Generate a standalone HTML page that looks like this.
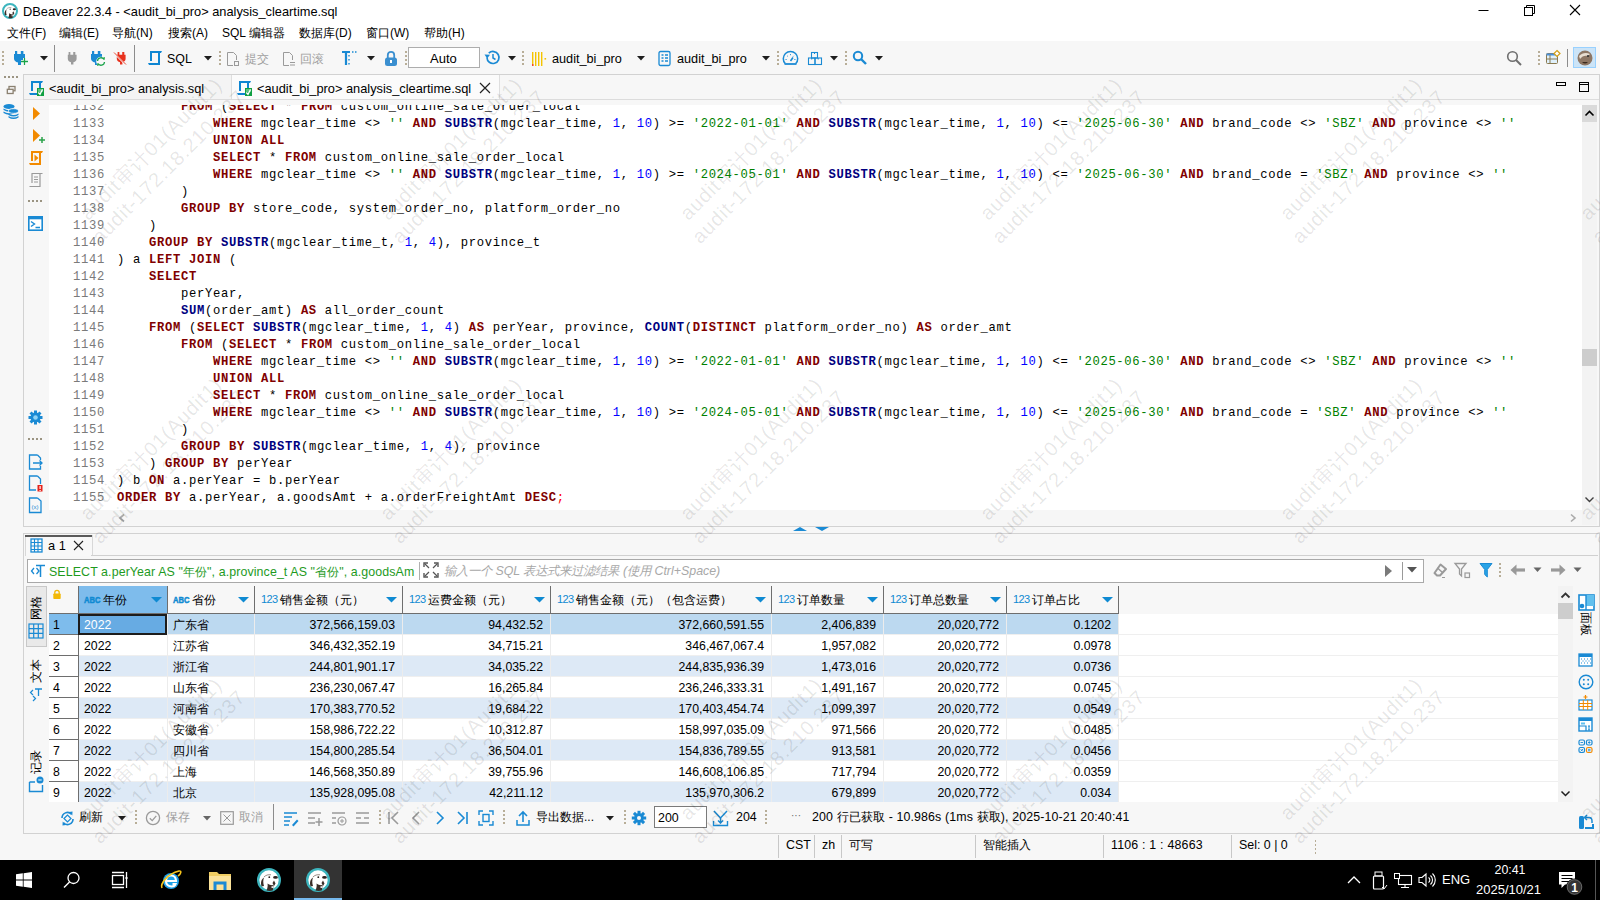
<!DOCTYPE html><html><head><meta charset="utf-8"><title>DBeaver</title><style>
*{margin:0;padding:0}
html,body{width:1600px;height:900px;overflow:hidden}
body{position:relative;background:#f7f7f7;font-family:"Liberation Sans",sans-serif;font-size:12px;color:#000}
.a{position:absolute;white-space:nowrap}
svg.a{overflow:visible}
.cl{position:absolute;left:0;height:17px;line-height:17px;font-family:"Liberation Mono",monospace;font-size:12.2px;letter-spacing:0.68px;white-space:pre;width:1533px}
.ln{position:absolute;left:24px;width:32px;text-align:left;color:#7a7a7a}
.cd{position:absolute;left:68px}
.k{color:#800000;font-weight:bold}
.f{color:#000080;font-weight:bold}
.s{color:#008000;font-style:normal}
.n{color:#0000ff;font-style:normal}
.sc{color:#ff0000;font-style:normal}
.gt{font-size:12.3px;line-height:16px;color:#000}
.wm{position:absolute;width:260px;height:50px;font-size:20px;letter-spacing:0.9px;line-height:25px;color:rgba(0,0,0,0.10);transform:rotate(-45deg);white-space:nowrap;text-align:center}
</style></head><body><div class="a" style="left:0px;top:0px;width:1600px;height:41px;background:#fff"></div>
<svg class="a" style="left:2px;top:3px;" width="16" height="16" viewBox="0 0 16 16"><g transform="scale(0.6666666666666666)"><circle cx="12" cy="12" r="10.5" fill="#fff" stroke="#3db5be" stroke-width="3"/><path d="M4.5 18.5 C3.5 15 4 12.5 5.8 10.5 L7 9.5 C6 12 6 15 7 18 Z" fill="#3a2e28"/><path d="M7 9 C9 7 11 6.5 14 6.8" stroke="#6a5a50" stroke-width="0.7" fill="none"/><circle cx="12.3" cy="9.2" r="0.9" fill="#2b2220"/><ellipse cx="18.5" cy="9.4" rx="2.4" ry="1.4" fill="#2b2220"/><path d="M10.5 15.5 C12.5 16.8 14.5 17.5 16.5 17 L16 22.2 C14 23.2 11.5 23.2 9.5 22.5 C10.5 20 11 18 10.5 15.5 Z" fill="#3a2e28"/><path d="M15.5 15 L17 12.5 L18.5 15.5 L17 18 Z" fill="#3a2e28"/><rect x="14.5" y="18.3" width="1.6" height="1.6" fill="#fff"/></g></svg>
<div class="a " style="left:23px;top:4px;font-size:12.8px;line-height:16px;color:#000;">DBeaver 22.3.4 - &lt;audit_bi_pro&gt; analysis_cleartime.sql</div>
<svg class="a" style="left:1476px;top:5px;" width="16" height="12" viewBox="0 0 16 12"><rect x="2.5" y="5" width="10" height="1" fill="#000"/></svg>
<svg class="a" style="left:1520px;top:3px;" width="16" height="14" viewBox="0 0 16 14"><rect x="4.5" y="4.5" width="8" height="8" fill="none" stroke="#000"/><path d="M6.5 4.5 V2.5 H14.5 V10.5 H12.5" fill="none" stroke="#000"/></svg>
<svg class="a" style="left:1568px;top:3px;" width="14" height="14" viewBox="0 0 14 14"><path d="M2 2 L12 12 M12 2 L2 12" stroke="#000" stroke-width="1.1"/></svg>
<div class="a " style="left:7px;top:25px;font-size:12px;line-height:16px;color:#000;">文件(F)</div>
<div class="a " style="left:59px;top:25px;font-size:12px;line-height:16px;color:#000;">编辑(E)</div>
<div class="a " style="left:112px;top:25px;font-size:12px;line-height:16px;color:#000;">导航(N)</div>
<div class="a " style="left:168px;top:25px;font-size:12px;line-height:16px;color:#000;">搜索(A)</div>
<div class="a " style="left:222px;top:25px;font-size:12px;line-height:16px;color:#000;">SQL 编辑器</div>
<div class="a " style="left:299px;top:25px;font-size:12px;line-height:16px;color:#000;">数据库(D)</div>
<div class="a " style="left:366px;top:25px;font-size:12px;line-height:16px;color:#000;">窗口(W)</div>
<div class="a " style="left:424px;top:25px;font-size:12px;line-height:16px;color:#000;">帮助(H)</div>
<div class="a" style="left:0px;top:41px;width:1600px;height:33px;background:#f7f7f7"></div>
<svg class="a" style="left:2px;top:51px;" width="2" height="16" viewBox="0 0 2 16"><rect x="0" y="0" width="2" height="2" fill="#b8ae98"/><rect x="0" y="4" width="2" height="2" fill="#b8ae98"/><rect x="0" y="8" width="2" height="2" fill="#b8ae98"/><rect x="0" y="12" width="2" height="2" fill="#b8ae98"/></svg>
<svg class="a" style="left:13px;top:51px;" width="16" height="16" viewBox="0 0 16 16"><path d="M1 3 H12 V7.5 C12 9.5 10.5 11 8 11.5 V14 H5 V11.5 C2.5 11 1 9.5 1 7.5 Z" fill="#1a8ad4"/><rect x="2" y="0" width="2.2" height="3.5" fill="#1a8ad4"/><rect x="7.8" y="0" width="2.6" height="3.5" fill="#1a8ad4"/><path d="M11.5 7 v7 M8 10.5 h7" stroke="#fff" stroke-width="3"/><path d="M11.5 7 v7 M8 10.5 h7" stroke="#1aa34a" stroke-width="1.3"/></svg>
<svg class="a" style="left:40px;top:56px;" width="8" height="5" viewBox="0 0 8 5"><path d="M0 0 H8 L4.0 4.5 Z" fill="#1e1e1e"/></svg>
<div class="a" style="left:54px;top:45px;width:1px;height:27px;background:#8c8c8c"></div>
<svg class="a" style="left:67px;top:52px;" width="14" height="16" viewBox="0 0 14 16"><g transform="scale(0.8 0.9)"><path d="M1 3 H12 V7.5 C12 9.5 10.5 11 8 11.5 V14 H5 V11.5 C2.5 11 1 9.5 1 7.5 Z" fill="#9b9b9b"/><rect x="2" y="0" width="2.2" height="3.5" fill="#9b9b9b"/><rect x="7.8" y="0" width="2.6" height="3.5" fill="#9b9b9b"/></g></svg>
<svg class="a" style="left:90px;top:51px;" width="16" height="16" viewBox="0 0 16 16"><path d="M1 3 H12 V7.5 C12 9.5 10.5 11 8 11.5 V14 H5 V11.5 C2.5 11 1 9.5 1 7.5 Z" fill="#1a8ad4"/><rect x="2" y="0" width="2.2" height="3.5" fill="#1a8ad4"/><rect x="7.8" y="0" width="2.6" height="3.5" fill="#1a8ad4"/><circle cx="11" cy="10.5" r="4.8" fill="#f7f7f7"/><path d="M7.5 10 a3.5 3.5 0 0 1 6.5 -1.5 M14.5 11 a3.5 3.5 0 0 1 -6.5 1.5" stroke="#1aa34a" stroke-width="1.3" fill="none"/><path d="M12.5 7 L14.5 9 L15 6 Z M9.5 14 L7.5 12 L7 15 Z" fill="#1aa34a"/></svg>
<svg class="a" style="left:114px;top:52px;" width="16" height="16" viewBox="0 0 16 16"><g transform="translate(2 0) scale(0.8 0.9)"><path d="M1 3 H12 V7.5 C12 9.5 10.5 11 8 11.5 V14 H5 V11.5 C2.5 11 1 9.5 1 7.5 Z" fill="#e8321e"/><rect x="2" y="0" width="2.2" height="3.5" fill="#e8321e"/><rect x="7.8" y="0" width="2.6" height="3.5" fill="#e8321e"/></g><path d="M0.5 1.5 L12 13" stroke="#f7f7f7" stroke-width="1.6"/><path d="M0 0.5 L12 12.5" stroke="#e8321e" stroke-width="0.9"/></svg>
<div class="a" style="left:134px;top:45px;width:1px;height:27px;background:#8c8c8c"></div>
<svg class="a" style="left:147px;top:50px;" width="16" height="16" viewBox="0 0 16 16"><path d="M3 1 H15 L14 3 H3 Z M3 1 H5 V11 H3 Z M11 1 H13 V15 H11 Z M1 13 H13 V15 H2 Z" fill="#0f86d2"/></svg>
<div class="a " style="left:167px;top:51px;font-size:12.4px;line-height:16px;color:#000;">SQL</div>
<svg class="a" style="left:204px;top:56px;" width="8" height="5" viewBox="0 0 8 5"><path d="M0 0 H8 L4.0 4.5 Z" fill="#1e1e1e"/></svg>
<svg class="a" style="left:219px;top:51px;" width="2" height="16" viewBox="0 0 2 16"><rect x="0" y="0" width="2" height="2" fill="#b8ae98"/><rect x="0" y="4" width="2" height="2" fill="#b8ae98"/><rect x="0" y="8" width="2" height="2" fill="#b8ae98"/><rect x="0" y="12" width="2" height="2" fill="#b8ae98"/></svg>
<svg class="a" style="left:226px;top:51px;" width="13" height="16" viewBox="0 0 13 16"><path d="M1.5 1.5 H7.5 L10.5 4.5 V9 M1.5 1.5 V14.5 H7" stroke="#9a9a9a" fill="none"/><rect x="8.5" y="10.5" width="4" height="4" fill="none" stroke="#9a9a9a"/></svg>
<div class="a " style="left:245px;top:51px;font-size:12.4px;line-height:16px;color:#a0a0a0;">提交</div>
<svg class="a" style="left:282px;top:51px;" width="14" height="16" viewBox="0 0 14 16"><path d="M1.5 1.5 H7.5 L10.5 4.5 V9 M1.5 1.5 V14.5 H7" stroke="#9a9a9a" fill="none"/><path d="M8 11.5 H13 M8 14 H13" stroke="#9a9a9a"/></svg>
<div class="a " style="left:300px;top:51px;font-size:12.4px;line-height:16px;color:#a0a0a0;">回滚</div>
<svg class="a" style="left:341px;top:50px;" width="16" height="16" viewBox="0 0 16 16"><path d="M1 2 H9 M5 2 V15" stroke="#1a8ad4" stroke-width="2.2"/><path d="M11 2 h1.5 M14 2 h1.5 M8 5 v1.5 M8 9 v1.5 M8 13 v1.5" stroke="#1a8ad4" stroke-width="1.4"/></svg>
<svg class="a" style="left:367px;top:56px;" width="8" height="5" viewBox="0 0 8 5"><path d="M0 0 H8 L4.0 4.5 Z" fill="#1e1e1e"/></svg>
<svg class="a" style="left:384px;top:50px;" width="14" height="17" viewBox="0 0 14 17"><path d="M3.8 8 V5 a3.2 3.2 0 0 1 6.4 0 V8" stroke="#3a8fd0" stroke-width="1.8" fill="none"/><rect x="1" y="7.5" width="12" height="8.5" rx="2.5" fill="#3a8fd0"/><rect x="6" y="10" width="2" height="3" fill="#fff"/></svg>
<svg class="a" style="left:405px;top:51px;" width="2" height="16" viewBox="0 0 2 16"><rect x="0" y="0" width="2" height="2" fill="#b8ae98"/><rect x="0" y="4" width="2" height="2" fill="#b8ae98"/><rect x="0" y="8" width="2" height="2" fill="#b8ae98"/><rect x="0" y="12" width="2" height="2" fill="#b8ae98"/></svg>
<div class="a" style="left:408px;top:47px;width:72px;height:21px;background:#fff;border:1px solid #adadad;box-sizing:border-box"></div>
<div class="a " style="left:430px;top:51px;font-size:13px;line-height:16px;color:#000;">Auto</div>
<svg class="a" style="left:484px;top:49px;" width="17" height="17" viewBox="0 0 17 17"><path d="M3 8.5 a6 6 0 1 0 1.8 -4.3" stroke="#1a8ad4" stroke-width="1.7" fill="none"/><path d="M0.5 5.5 L3.2 9.5 L6 5.8 Z" fill="#1a8ad4"/><path d="M9 5 V9 L11.5 10.5" stroke="#1a8ad4" stroke-width="1.5" fill="none"/></svg>
<svg class="a" style="left:508px;top:56px;" width="8" height="5" viewBox="0 0 8 5"><path d="M0 0 H8 L4.0 4.5 Z" fill="#1e1e1e"/></svg>
<svg class="a" style="left:522px;top:51px;" width="2" height="16" viewBox="0 0 2 16"><rect x="0" y="0" width="2" height="2" fill="#b8ae98"/><rect x="0" y="4" width="2" height="2" fill="#b8ae98"/><rect x="0" y="8" width="2" height="2" fill="#b8ae98"/><rect x="0" y="12" width="2" height="2" fill="#b8ae98"/></svg>
<svg class="a" style="left:532px;top:51px;" width="15" height="16" viewBox="0 0 15 16"><rect x="0" y="1" width="1.4" height="14" fill="#f5c400"/><rect x="3" y="1" width="1.4" height="14" fill="#f5c400"/><rect x="6" y="1" width="1.4" height="14" fill="#f5c400"/><rect x="9" y="1" width="1.4" height="14" fill="#f5c400"/><rect x="12.5" y="7" width="1.6" height="1.6" fill="#f5c400"/><rect x="0" y="13" width="1.4" height="2" fill="#e43"/></svg>
<div class="a " style="left:552px;top:51px;font-size:12.7px;line-height:16px;color:#000;">audit_bi_pro</div>
<svg class="a" style="left:637px;top:56px;" width="8" height="5" viewBox="0 0 8 5"><path d="M0 0 H8 L4.0 4.5 Z" fill="#1e1e1e"/></svg>
<svg class="a" style="left:658px;top:50px;" width="14" height="17" viewBox="0 0 14 17"><rect x="1" y="1.5" width="11" height="14" rx="1.5" fill="none" stroke="#1a8ad4" stroke-width="1.3"/><path d="M3.5 5 h2 M7 5 h3 M3.5 8 h2 M7 8 h3 M3.5 11 h2 M7 11 h3" stroke="#1a8ad4" stroke-width="1.3"/></svg>
<div class="a " style="left:677px;top:51px;font-size:12.7px;line-height:16px;color:#000;">audit_bi_pro</div>
<svg class="a" style="left:762px;top:56px;" width="8" height="5" viewBox="0 0 8 5"><path d="M0 0 H8 L4.0 4.5 Z" fill="#1e1e1e"/></svg>
<svg class="a" style="left:777px;top:51px;" width="2" height="16" viewBox="0 0 2 16"><rect x="0" y="0" width="2" height="2" fill="#b8ae98"/><rect x="0" y="4" width="2" height="2" fill="#b8ae98"/><rect x="0" y="8" width="2" height="2" fill="#b8ae98"/><rect x="0" y="12" width="2" height="2" fill="#b8ae98"/></svg>
<svg class="a" style="left:782px;top:51px;" width="18" height="16" viewBox="0 0 18 16"><path d="M3.2 12.5 A7.2 7.2 0 1 1 13.8 12.5" stroke="#1a8ad4" stroke-width="1.5" fill="none"/><path d="M2.5 13 H14.5" stroke="#1a8ad4" stroke-width="1.8"/><path d="M8.5 10 L11 6.5" stroke="#1a8ad4" stroke-width="1.6"/><path d="M3.5 8.5 h1.2 M5.2 4.8 l0.8 0.8 M8.5 3 v1.2 M11.8 4.8 l-0.8 0.8 M12.3 8.5 h1.2" stroke="#1a8ad4" stroke-width="0.9"/></svg>
<svg class="a" style="left:807px;top:51px;" width="15" height="15" viewBox="0 0 15 15"><rect x="4.5" y="1.5" width="6" height="5.5" fill="none" stroke="#1a8ad4" stroke-width="1.1"/><rect x="1.5" y="7" width="6.5" height="6.5" fill="none" stroke="#1a8ad4" stroke-width="1.1"/><rect x="8" y="7" width="6.5" height="6.5" fill="none" stroke="#1a8ad4" stroke-width="1.1"/><path d="M7.5 1.5 V3 M4.7 7 V8.5 M11.2 7 V8.5" stroke="#1a8ad4" stroke-width="1"/></svg>
<svg class="a" style="left:830px;top:56px;" width="8" height="5" viewBox="0 0 8 5"><path d="M0 0 H8 L4.0 4.5 Z" fill="#1e1e1e"/></svg>
<svg class="a" style="left:845px;top:51px;" width="2" height="16" viewBox="0 0 2 16"><rect x="0" y="0" width="2" height="2" fill="#b8ae98"/><rect x="0" y="4" width="2" height="2" fill="#b8ae98"/><rect x="0" y="8" width="2" height="2" fill="#b8ae98"/><rect x="0" y="12" width="2" height="2" fill="#b8ae98"/></svg>
<svg class="a" style="left:852px;top:50px;" width="16" height="16" viewBox="0 0 16 16"><circle cx="6" cy="6" r="4.2" fill="none" stroke="#1a8ad4" stroke-width="2"/><path d="M9 9 L14 14" stroke="#1a8ad4" stroke-width="2.4"/></svg>
<svg class="a" style="left:875px;top:56px;" width="8" height="5" viewBox="0 0 8 5"><path d="M0 0 H8 L4.0 4.5 Z" fill="#1e1e1e"/></svg>
<svg class="a" style="left:1506px;top:50px;" width="17" height="17" viewBox="0 0 17 17"><circle cx="6.5" cy="6.5" r="4.8" fill="none" stroke="#6f6f6f" stroke-width="1.6"/><path d="M10 10 L15 15" stroke="#6f6f6f" stroke-width="2"/></svg>
<svg class="a" style="left:1538px;top:51px;" width="2" height="16" viewBox="0 0 2 16"><rect x="0" y="0" width="2" height="2" fill="#b8ae98"/><rect x="0" y="4" width="2" height="2" fill="#b8ae98"/><rect x="0" y="8" width="2" height="2" fill="#b8ae98"/><rect x="0" y="12" width="2" height="2" fill="#b8ae98"/></svg>
<svg class="a" style="left:1545px;top:50px;" width="16" height="16" viewBox="0 0 16 16"><rect x="1.5" y="3.5" width="11" height="10" rx="1" fill="#dff0fb" stroke="#8a7a50" stroke-width="1"/><rect x="1.5" y="3.5" width="11" height="2" fill="#4a90d9"/><path d="M5 5 V13.5 M1.5 9 H12.5" stroke="#8a7a50"/><path d="M12 0.5 L15 3.5 L12 6.5 L9 3.5 Z" fill="#fff" stroke="#d4a017" stroke-width="1.2"/></svg>
<div class="a" style="left:1567px;top:49px;width:1px;height:18px;background:#8c8c8c"></div>
<div class="a" style="left:1573px;top:47px;width:23px;height:21px;background:#cce4f7;border:1px solid #99d1ff;box-sizing:border-box"></div>
<svg class="a" style="left:1577px;top:50px;" width="16" height="16" viewBox="0 0 16 16"><circle cx="8" cy="8" r="7.5" fill="#8d7664"/><path d="M2 6 C5 3 9 2 13 4 L11 6 C8 5 5 6 3 9 Z" fill="#e8ddd0"/><circle cx="11" cy="6" r="1" fill="#2b2b2b"/><path d="M5 12 Q8 15 11 12" fill="#3b2b20"/></svg>
<svg class="a" style="left:4px;top:76px;" width="14" height="2" viewBox="0 0 14 2"><rect x="0" y="0" width="2" height="2" fill="#9b9482"/><rect x="4" y="0" width="2" height="2" fill="#9b9482"/><rect x="8" y="0" width="2" height="2" fill="#9b9482"/><rect x="12" y="0" width="2" height="2" fill="#9b9482"/></svg>
<svg class="a" style="left:6px;top:85px;" width="10" height="10" viewBox="0 0 10 10"><rect x="3" y="1.5" width="6" height="4.3" fill="none" stroke="#8a8070" stroke-width="1.3"/><rect x="1.3" y="4.3" width="5.8" height="4.2" fill="#f7f7f7" stroke="#8a8070" stroke-width="1.3"/></svg>
<svg class="a" style="left:3px;top:103px;" width="16" height="17" viewBox="0 0 16 17"><ellipse cx="6" cy="3.5" rx="5.5" ry="2.5" fill="#1a8ad4"/><path d="M0.5 5.5 Q6 9 11.5 5.5 V7 Q6 10.5 0.5 7 Z M0.5 8.5 Q6 12 11.5 8.5 V10 Q6 13.5 0.5 10 Z" fill="#1a8ad4"/><ellipse cx="10.5" cy="8" rx="5" ry="2.3" fill="#1a8ad4" stroke="#f7f7f7" stroke-width="0.8"/><path d="M5.5 10.5 Q10.5 13.5 15.5 10.5 V12 Q10.5 15 5.5 12 Z M5.5 13 Q10.5 16 15.5 13 V14.5 Q10.5 17.5 5.5 14.5 Z" fill="#1a8ad4"/></svg>
<div class="a" style="left:23px;top:74px;width:1577px;height:453px;background:#f7f7f7;border:1px solid #d2d2d2;box-sizing:border-box"></div>
<div class="a" style="left:24px;top:75px;width:208px;height:24px;background:#f4f4f4"></div>
<div class="a" style="left:231px;top:75px;width:267px;height:24px;background:#fbfbfb;border-left:1px solid #dedede;border-right:1px solid #dedede"></div>
<div class="a" style="left:24px;top:99px;width:1575px;height:1px;background:#dcdcdc"></div>
<svg class="a" style="left:28px;top:80px;" width="17" height="17" viewBox="0 0 17 17"><path d="M3 1 H15 L14 3 H3 Z M3 1 H5 V11 H3 Z M11 1 H13 V15 H11 Z M1 13 H13 V15 H2 Z" fill="#0f86d2"/><rect x="9" y="8" width="7" height="8" fill="#10a042"/><rect x="10" y="9" width="5" height="3" fill="#5cbf80"/><path d="M10.3 12.5 L12 14.3 L14.5 9.5" stroke="#fff" stroke-width="1.3" fill="none"/></svg>
<div class="a " style="left:49px;top:81px;font-size:12.8px;line-height:16px;color:#000;">&lt;audit_bi_pro&gt; analysis.sql</div>
<svg class="a" style="left:236px;top:80px;" width="17" height="17" viewBox="0 0 17 17"><path d="M3 1 H15 L14 3 H3 Z M3 1 H5 V11 H3 Z M11 1 H13 V15 H11 Z M1 13 H13 V15 H2 Z" fill="#0f86d2"/><rect x="9" y="8" width="7" height="8" fill="#10a042"/><rect x="10" y="9" width="5" height="3" fill="#5cbf80"/><path d="M10.3 12.5 L12 14.3 L14.5 9.5" stroke="#fff" stroke-width="1.3" fill="none"/></svg>
<div class="a " style="left:257px;top:81px;font-size:12.8px;line-height:16px;color:#000;">&lt;audit_bi_pro&gt; analysis_cleartime.sql</div>
<svg class="a" style="left:479px;top:82px;" width="12" height="12" viewBox="0 0 12 12"><path d="M1 1 L11 11 M11 1 L1 11" stroke="#222" stroke-width="1.2"/></svg>
<svg class="a" style="left:1556px;top:82px;" width="11" height="5" viewBox="0 0 11 5"><rect x="0.5" y="0.5" width="9" height="3" fill="none" stroke="#000" stroke-width="1"/></svg>
<svg class="a" style="left:1579px;top:82px;" width="11" height="11" viewBox="0 0 11 11"><rect x="0.5" y="0.5" width="9" height="9" fill="none" stroke="#000" stroke-width="1"/><path d="M0.5 2.5 H9.5" stroke="#000" stroke-width="1"/></svg>
<svg class="a" style="left:32px;top:107px;" width="9" height="14" viewBox="0 0 9 14"><path d="M1 0 L8 6.5 L1 13 Z" fill="#f28a00"/></svg>
<svg class="a" style="left:32px;top:129px;" width="13" height="14" viewBox="0 0 13 14"><path d="M1 0 L8 6.5 L1 13 Z" fill="#f28a00"/><path d="M10 8 v6 M7 11 h6" stroke="#2aa24a" stroke-width="1.5"/></svg>
<svg class="a" style="left:28px;top:150px;" width="16" height="16" viewBox="0 0 16 16"><path d="M3 1 H15 L14 3 H3 Z M3 1 H5 V11 H3 Z M11 1 H13 V15 H11 Z M1 13 H13 V15 H2 Z" fill="#f28a00"/><path d="M6.5 4.5 L10.5 8 L6.5 11.5 Z" fill="#f28a00"/></svg>
<svg class="a" style="left:28px;top:172px;" width="16" height="16" viewBox="0 0 16 16"><path d="M3.5 1.5 H14.5 M4 1.5 V11 M12 1.5 V14.5 H1.5" stroke="#9a9a9a" stroke-width="1.2" fill="none"/><path d="M6 5 h4 M6 7.5 h4 M6 10 h4" stroke="#9a9a9a"/></svg>
<svg class="a" style="left:28px;top:200px;" width="14" height="2" viewBox="0 0 14 2"><rect x="0" y="0" width="2" height="2" fill="#9b9482"/><rect x="4" y="0" width="2" height="2" fill="#9b9482"/><rect x="8" y="0" width="2" height="2" fill="#9b9482"/><rect x="12" y="0" width="2" height="2" fill="#9b9482"/></svg>
<svg class="a" style="left:28px;top:216px;" width="15" height="15" viewBox="0 0 15 15"><rect x="0.8" y="0.8" width="13.4" height="13.4" fill="#fff" stroke="#1a8ad4" stroke-width="1.6"/><rect x="0.8" y="0.8" width="13.4" height="2.5" fill="#1a8ad4"/><path d="M3 5.5 L6.5 8 L3 10.5 M7.5 11.5 H12" stroke="#1a8ad4" stroke-width="1.4" fill="none"/></svg>
<svg class="a" style="left:28px;top:410px;" width="15" height="15" viewBox="0 0 15 15"><circle cx="7.5" cy="7.5" r="5" fill="#1a8ad4"/><rect x="6" y="0.5" width="3" height="3.5" fill="#1a8ad4" transform="rotate(0 7.5 7.5)"/><rect x="6" y="0.5" width="3" height="3.5" fill="#1a8ad4" transform="rotate(45 7.5 7.5)"/><rect x="6" y="0.5" width="3" height="3.5" fill="#1a8ad4" transform="rotate(90 7.5 7.5)"/><rect x="6" y="0.5" width="3" height="3.5" fill="#1a8ad4" transform="rotate(135 7.5 7.5)"/><rect x="6" y="0.5" width="3" height="3.5" fill="#1a8ad4" transform="rotate(180 7.5 7.5)"/><rect x="6" y="0.5" width="3" height="3.5" fill="#1a8ad4" transform="rotate(225 7.5 7.5)"/><rect x="6" y="0.5" width="3" height="3.5" fill="#1a8ad4" transform="rotate(270 7.5 7.5)"/><rect x="6" y="0.5" width="3" height="3.5" fill="#1a8ad4" transform="rotate(315 7.5 7.5)"/><circle cx="7.5" cy="7.5" r="2.3" fill="#8fd3f5"/></svg>
<svg class="a" style="left:28px;top:438px;" width="14" height="2" viewBox="0 0 14 2"><rect x="0" y="0" width="2" height="2" fill="#9b9482"/><rect x="4" y="0" width="2" height="2" fill="#9b9482"/><rect x="8" y="0" width="2" height="2" fill="#9b9482"/><rect x="12" y="0" width="2" height="2" fill="#9b9482"/></svg>
<svg class="a" style="left:28px;top:454px;" width="15" height="16" viewBox="0 0 15 16"><path d="M9.5 1 H1.5 V15 H12.5 V12 M12.5 6 V4 L9.5 1" stroke="#1a8ad4" stroke-width="1.3" fill="none"/><path d="M5 9 H14 M11.5 6.5 L14 9 L11.5 11.5" stroke="#1a8ad4" stroke-width="1.3" fill="none"/></svg>
<svg class="a" style="left:28px;top:475px;" width="15" height="17" viewBox="0 0 15 17"><path d="M9.5 1 H1.5 V15 H8 M12.5 9 V4 L9.5 1" stroke="#1a8ad4" stroke-width="1.3" fill="none"/><rect x="9.5" y="10" width="5" height="6.5" fill="#e5231b"/><rect x="11.5" y="11" width="1.2" height="3" fill="#fff"/><rect x="11.5" y="15" width="1.2" height="1" fill="#fff"/></svg>
<svg class="a" style="left:28px;top:497px;" width="15" height="17" viewBox="0 0 15 17"><path d="M9.5 1 H1.5 V15.5 H13 V4 L9.5 1" stroke="#1a8ad4" stroke-width="1.3" fill="none"/><text x="7" y="12" font-size="6" fill="#1a8ad4" text-anchor="middle" font-family="Liberation Sans">(x)</text></svg>
<div class="a" style="left:49px;top:105px;width:1533px;height:405px;background:#fff"></div>
<div class="a" style="left:49px;top:105px;width:1533px;height:405px;overflow:hidden">
<div class="cl" style="top:-6.5px"><span class="ln">1132</span><span class="cd">        <b class="k">FROM</b> (<b class="k">SELECT</b> * <b class="k">FROM</b> custom_online_sale_order_local</span></div>
<div class="cl" style="top:10.5px"><span class="ln">1133</span><span class="cd">            <b class="k">WHERE</b> mgclear_time &lt;&gt; <i class="s">''</i> <b class="k">AND</b> <b class="f">SUBSTR</b>(mgclear_time, <i class="n">1</i>, <i class="n">10</i>) &gt;= <i class="s">'2022-01-01'</i> <b class="k">AND</b> <b class="f">SUBSTR</b>(mgclear_time, <i class="n">1</i>, <i class="n">10</i>) &lt;= <i class="s">'2025-06-30'</i> <b class="k">AND</b> brand_code &lt;&gt; <i class="s">'SBZ'</i> <b class="k">AND</b> province &lt;&gt; <i class="s">''</i></span></div>
<div class="cl" style="top:27.5px"><span class="ln">1134</span><span class="cd">            <b class="k">UNION</b> <b class="k">ALL</b></span></div>
<div class="cl" style="top:44.5px"><span class="ln">1135</span><span class="cd">            <b class="k">SELECT</b> * <b class="k">FROM</b> custom_online_sale_order_local</span></div>
<div class="cl" style="top:61.5px"><span class="ln">1136</span><span class="cd">            <b class="k">WHERE</b> mgclear_time &lt;&gt; <i class="s">''</i> <b class="k">AND</b> <b class="f">SUBSTR</b>(mgclear_time, <i class="n">1</i>, <i class="n">10</i>) &gt;= <i class="s">'2024-05-01'</i> <b class="k">AND</b> <b class="f">SUBSTR</b>(mgclear_time, <i class="n">1</i>, <i class="n">10</i>) &lt;= <i class="s">'2025-06-30'</i> <b class="k">AND</b> brand_code = <i class="s">'SBZ'</i> <b class="k">AND</b> province &lt;&gt; <i class="s">''</i></span></div>
<div class="cl" style="top:78.5px"><span class="ln">1137</span><span class="cd">        )</span></div>
<div class="cl" style="top:95.5px"><span class="ln">1138</span><span class="cd">        <b class="k">GROUP</b> <b class="k">BY</b> store_code, system_order_no, platform_order_no</span></div>
<div class="cl" style="top:112.5px"><span class="ln">1139</span><span class="cd">    )</span></div>
<div class="cl" style="top:129.5px"><span class="ln">1140</span><span class="cd">    <b class="k">GROUP</b> <b class="k">BY</b> <b class="f">SUBSTR</b>(mgclear_time_t, <i class="n">1</i>, <i class="n">4</i>), province_t</span></div>
<div class="cl" style="top:146.5px"><span class="ln">1141</span><span class="cd">) a <b class="k">LEFT</b> <b class="k">JOIN</b> (</span></div>
<div class="cl" style="top:163.5px"><span class="ln">1142</span><span class="cd">    <b class="k">SELECT</b></span></div>
<div class="cl" style="top:180.5px"><span class="ln">1143</span><span class="cd">        perYear,</span></div>
<div class="cl" style="top:197.5px"><span class="ln">1144</span><span class="cd">        <b class="f">SUM</b>(order_amt) <b class="k">AS</b> all_order_count</span></div>
<div class="cl" style="top:214.5px"><span class="ln">1145</span><span class="cd">    <b class="k">FROM</b> (<b class="k">SELECT</b> <b class="f">SUBSTR</b>(mgclear_time, <i class="n">1</i>, <i class="n">4</i>) <b class="k">AS</b> perYear, province, <b class="f">COUNT</b>(<b class="k">DISTINCT</b> platform_order_no) <b class="k">AS</b> order_amt</span></div>
<div class="cl" style="top:231.5px"><span class="ln">1146</span><span class="cd">        <b class="k">FROM</b> (<b class="k">SELECT</b> * <b class="k">FROM</b> custom_online_sale_order_local</span></div>
<div class="cl" style="top:248.5px"><span class="ln">1147</span><span class="cd">            <b class="k">WHERE</b> mgclear_time &lt;&gt; <i class="s">''</i> <b class="k">AND</b> <b class="f">SUBSTR</b>(mgclear_time, <i class="n">1</i>, <i class="n">10</i>) &gt;= <i class="s">'2022-01-01'</i> <b class="k">AND</b> <b class="f">SUBSTR</b>(mgclear_time, <i class="n">1</i>, <i class="n">10</i>) &lt;= <i class="s">'2025-06-30'</i> <b class="k">AND</b> brand_code &lt;&gt; <i class="s">'SBZ'</i> <b class="k">AND</b> province &lt;&gt; <i class="s">''</i></span></div>
<div class="cl" style="top:265.5px"><span class="ln">1148</span><span class="cd">            <b class="k">UNION</b> <b class="k">ALL</b></span></div>
<div class="cl" style="top:282.5px"><span class="ln">1149</span><span class="cd">            <b class="k">SELECT</b> * <b class="k">FROM</b> custom_online_sale_order_local</span></div>
<div class="cl" style="top:299.5px"><span class="ln">1150</span><span class="cd">            <b class="k">WHERE</b> mgclear_time &lt;&gt; <i class="s">''</i> <b class="k">AND</b> <b class="f">SUBSTR</b>(mgclear_time, <i class="n">1</i>, <i class="n">10</i>) &gt;= <i class="s">'2024-05-01'</i> <b class="k">AND</b> <b class="f">SUBSTR</b>(mgclear_time, <i class="n">1</i>, <i class="n">10</i>) &lt;= <i class="s">'2025-06-30'</i> <b class="k">AND</b> brand_code = <i class="s">'SBZ'</i> <b class="k">AND</b> province &lt;&gt; <i class="s">''</i></span></div>
<div class="cl" style="top:316.5px"><span class="ln">1151</span><span class="cd">        )</span></div>
<div class="cl" style="top:333.5px"><span class="ln">1152</span><span class="cd">        <b class="k">GROUP</b> <b class="k">BY</b> <b class="f">SUBSTR</b>(mgclear_time, <i class="n">1</i>, <i class="n">4</i>), province</span></div>
<div class="cl" style="top:350.5px"><span class="ln">1153</span><span class="cd">    ) <b class="k">GROUP</b> <b class="k">BY</b> perYear</span></div>
<div class="cl" style="top:367.5px"><span class="ln">1154</span><span class="cd">) b <b class="k">ON</b> a.perYear = b.perYear</span></div>
<div class="cl" style="top:384.5px"><span class="ln">1155</span><span class="cd"><b class="k">ORDER</b> <b class="k">BY</b> a.perYear, a.goodsAmt + a.orderFreightAmt <b class="k">DESC</b><i class="sc">;</i></span></div>
</div>
<div class="a" style="left:1582px;top:105px;width:15px;height:420px;background:#f3f3f3"></div>
<div class="a" style="left:1582px;top:105px;width:15px;height:17px;background:#dadada"></div>
<svg class="a" style="left:1584px;top:109px;" width="11" height="8" viewBox="0 0 11 8"><path d="M1.5 6.5 L5.5 2.5 L9.5 6.5" stroke="#000" stroke-width="1.6" fill="none"/></svg>
<div class="a" style="left:1582px;top:349px;width:15px;height:17px;background:#cdcdcd"></div>
<svg class="a" style="left:1584px;top:496px;" width="11" height="8" viewBox="0 0 11 8"><path d="M1.5 1.5 L5.5 5.5 L9.5 1.5" stroke="#404040" stroke-width="1.4" fill="none"/></svg>
<div class="a" style="left:49px;top:510px;width:1533px;height:15px;background:#f6f6f6"></div>
<svg class="a" style="left:118px;top:513px;" width="8" height="10" viewBox="0 0 8 10"><path d="M6 1.5 L2 5 L6 8.5" stroke="#aaa" stroke-width="1.8" fill="none"/></svg>
<svg class="a" style="left:1569px;top:513px;" width="8" height="10" viewBox="0 0 8 10"><path d="M2 1.5 L6 5 L2 8.5" stroke="#aaa" stroke-width="1.6" fill="none"/></svg>
<div class="a" style="left:23px;top:527px;width:1577px;height:6px;background:#f7f7f7"></div>
<svg class="a" style="left:792px;top:526px;" width="16" height="6" viewBox="0 0 16 6"><path d="M1 5 L8 1 L15 5 Z" fill="#1a8ad4"/></svg>
<svg class="a" style="left:814px;top:526px;" width="16" height="6" viewBox="0 0 16 6"><path d="M1 1 L8 5 L15 1 Z" fill="#1a8ad4"/></svg>
<div class="a" style="left:23px;top:533px;width:1577px;height:301px;background:#f7f7f7;border:1px solid #d2d2d2;box-sizing:border-box"></div>
<div class="a" style="left:25px;top:535px;width:66px;height:21px;background:#f8f8f8;border-left:1px solid #d8d8d8;border-right:1px solid #d8d8d8"></div>
<div class="a" style="left:25px;top:535px;width:67px;height:2px;background:#5a5a5a"></div>
<div class="a" style="left:91px;top:555px;width:1507px;height:1px;background:#d0d0d0"></div>
<svg class="a" style="left:30px;top:538px;" width="14" height="16" viewBox="0 0 14 16"><rect x="1" y="1" width="11" height="13" fill="none" stroke="#1a8ad4" stroke-width="1.3"/><path d="M1 4.5 H12 M1 8 H12 M1 11.5 H12 M4.5 1 V14 M8 1 V14" stroke="#1a8ad4" stroke-width="1.1"/></svg>
<div class="a " style="left:48px;top:538px;font-size:12.8px;line-height:16px;color:#000;">a 1</div>
<svg class="a" style="left:73px;top:540px;" width="11" height="11" viewBox="0 0 11 11"><path d="M1 1 L10 10 M10 1 L1 10" stroke="#222" stroke-width="1.1"/></svg>
<div class="a" style="left:27px;top:559px;width:1397px;height:24px;background:#fff;border:1px solid #a9a9a9;box-sizing:border-box"></div>
<svg class="a" style="left:30px;top:563px;" width="16" height="16" viewBox="0 0 16 16"><path d="M4 5 L1.5 8 L4 11" stroke="#1a8ad4" stroke-width="1.3" fill="none"/><path d="M6.5 5 L9 8 L6.5 11" stroke="#1a8ad4" stroke-width="1.3" fill="none"/><path d="M6 2.5 H15 M10.5 2.5 V14" stroke="#1a8ad4" stroke-width="1.5"/></svg>
<div class="a " style="left:49px;top:564px;font-size:12.4px;line-height:16px;color:#1e9a1e;letter-spacing:0.1px">SELECT a.perYear AS "年份", a.province_t AS "省份", a.goodsAm</div>
<div class="a" style="left:419px;top:562px;width:1px;height:18px;background:#b0b0b0"></div>
<svg class="a" style="left:423px;top:562px;" width="16" height="17" viewBox="0 0 16 17"><path d="M1 5 V1 H5 M11 1 H15 V5 M15 11 V15 H11 M5 15 H1 V11" stroke="#555" stroke-width="1.4" fill="none"/><path d="M2 2 L6 6 M14 2 L10 6 M14 14 L10 10 M2 14 L6 10" stroke="#555" stroke-width="1.2"/></svg>
<div class="a " style="left:444px;top:563px;font-size:12.4px;line-height:16px;color:#a8a8a8;font-style:italic">输入一个 SQL 表达式来过滤结果 (使用 Ctrl+Space)</div>
<svg class="a" style="left:1384px;top:564px;" width="9" height="14" viewBox="0 0 9 14"><path d="M1 1 L8 7 L1 13 Z" fill="#7a7a7a"/></svg>
<div class="a" style="left:1402px;top:562px;width:1px;height:18px;background:#9a9a9a"></div>
<svg class="a" style="left:1406px;top:566px;" width="12" height="8" viewBox="0 0 12 8"><path d="M1 1 H11 L6 6.5 Z" fill="#555"/></svg>
<svg class="a" style="left:1432px;top:562px;" width="17" height="17" viewBox="0 0 17 17"><path d="M8.5 2.5 L14 7 L8 13.5 H5 L2.5 11 Z" fill="none" stroke="#9a9a9a" stroke-width="2" stroke-linejoin="round"/><path d="M5.5 6 L10.5 10.5" stroke="#9a9a9a" stroke-width="1.5"/><path d="M10 15.5 H13" stroke="#9a9a9a"/></svg>
<svg class="a" style="left:1454px;top:562px;" width="17" height="17" viewBox="0 0 17 17"><path d="M1 1.5 H12 L7.5 7 V14 L5.5 12 V7 Z" fill="none" stroke="#9a9a9a" stroke-width="1.3"/><rect x="11" y="11" width="4.5" height="4.5" fill="none" stroke="#9a9a9a" stroke-width="1.2"/></svg>
<svg class="a" style="left:1479px;top:562px;" width="14" height="17" viewBox="0 0 14 17"><path d="M1 1.5 H13 L8.3 7.5 V15 L5.7 12.5 V7.5 Z" fill="#29a3e6" stroke="#1a8ad4" stroke-width="1"/></svg>
<div class="a" style="left:1499px;top:563px;width:2px;height:15px;background:repeating-linear-gradient(#b8ae98 0 2px,transparent 2px 4px)"></div>
<svg class="a" style="left:1510px;top:564px;" width="16" height="12" viewBox="0 0 16 12"><path d="M6.5 0.5 L0.5 6 L6.5 11.5 Z" fill="#999"/><path d="M5 6 H15" stroke="#999" stroke-width="3.2"/></svg>
<svg class="a" style="left:1533px;top:567px;" width="9" height="6" viewBox="0 0 9 6"><path d="M0.5 0.5 H8.5 L4.5 5 Z" fill="#666"/></svg>
<svg class="a" style="left:1550px;top:564px;" width="16" height="12" viewBox="0 0 16 12"><path d="M9.5 0.5 L15.5 6 L9.5 11.5 Z" fill="#999"/><path d="M1 6 H11" stroke="#999" stroke-width="3.2"/></svg>
<svg class="a" style="left:1573px;top:567px;" width="9" height="6" viewBox="0 0 9 6"><path d="M0.5 0.5 H8.5 L4.5 5 Z" fill="#666"/></svg>
<div class="a" style="left:26px;top:586px;width:21px;height:61px;background:#e9e9e9;border:1px solid #c8c8c8;box-sizing:border-box"></div>
<div class="a " style="left:21px;top:600px;font-size:12.4px;line-height:16px;color:#000;width:30px;text-align:center;transform:rotate(-90deg)">网格</div>
<svg class="a" style="left:28px;top:623px;" width="16" height="16" viewBox="0 0 16 16"><rect x="1" y="1" width="14" height="14" fill="none" stroke="#1a8ad4" stroke-width="1.2"/><path d="M1 5.7 H15 M1 10.3 H15 M5.7 1 V15 M10.3 1 V15" stroke="#1a8ad4" stroke-width="1.2"/></svg>
<div class="a " style="left:21px;top:663px;font-size:12.4px;line-height:16px;color:#000;width:30px;text-align:center;transform:rotate(-90deg)">文本</div>
<svg class="a" style="left:29px;top:687px;" width="14" height="16" viewBox="0 0 14 16"><path d="M4 3 L1.5 5.5 L4 8 M4 9 L6.5 11.5 L4 14" stroke="#1a8ad4" stroke-width="1.2" fill="none"/><path d="M6 2 H13 M9.5 2 V9" stroke="#1a8ad4" stroke-width="1.3"/></svg>
<div class="a " style="left:21px;top:754px;font-size:12.4px;line-height:16px;color:#000;width:30px;text-align:center;transform:rotate(-90deg)">记录</div>
<svg class="a" style="left:28px;top:776px;" width="16" height="17" viewBox="0 0 16 17"><path d="M1.5 6 V15.5 H14.5 V9 M7 6 H1.5" stroke="#1a8ad4" stroke-width="1.4" fill="none"/><circle cx="12" cy="4" r="3.5" fill="#1a8ad4"/><path d="M10.3 4 H13.7" stroke="#fff" stroke-width="1"/></svg>
<div class="a" style="left:49px;top:586px;width:1509px;height:216px;background:#fff"></div>
<div class="a" style="left:49px;top:586px;width:1509px;height:28px;background:#f7f7f7"></div>
<div class="a" style="left:78px;top:586px;width:89px;height:28px;background:#7ebcec"></div>
<div class="a" style="left:49px;top:613px;width:1069px;height:1px;background:#6e6e6e"></div>
<div class="a" style="left:78px;top:586px;width:1px;height:28px;background:#6e6e6e"></div>
<div class="a" style="left:167px;top:586px;width:1px;height:28px;background:#6e6e6e"></div>
<div class="a" style="left:254px;top:586px;width:1px;height:28px;background:#6e6e6e"></div>
<div class="a" style="left:402px;top:586px;width:1px;height:28px;background:#6e6e6e"></div>
<div class="a" style="left:550px;top:586px;width:1px;height:28px;background:#6e6e6e"></div>
<div class="a" style="left:771px;top:586px;width:1px;height:28px;background:#6e6e6e"></div>
<div class="a" style="left:883px;top:586px;width:1px;height:28px;background:#6e6e6e"></div>
<div class="a" style="left:1006px;top:586px;width:1px;height:28px;background:#6e6e6e"></div>
<div class="a" style="left:1118px;top:586px;width:1px;height:28px;background:#6e6e6e"></div>
<svg class="a" style="left:53px;top:590px;" width="8" height="9" viewBox="0 0 8 9"><rect x="0.3" y="3.5" width="7.4" height="5.5" rx="0.8" fill="#f2b807"/><path d="M1.8 4 V2.6 a2.2 2.2 0 0 1 4.4 0 V4" stroke="#f2b807" stroke-width="1.3" fill="none"/></svg>
<svg class="a" style="left:84px;top:595px;" width="18" height="9" viewBox="0 0 18 9"><text x="0" y="7.8" font-size="9.6" font-weight="bold" fill="#0f8ad2" stroke="#0f8ad2" stroke-width="0.5" font-family="Liberation Sans" textLength="16.5" lengthAdjust="spacingAndGlyphs">ABC</text></svg>
<div class="a " style="left:103px;top:592px;font-size:12.4px;line-height:16px;color:#000;">年份</div>
<svg class="a" style="left:151px;top:597px;" width="11" height="6" viewBox="0 0 11 6"><path d="M0 0 H11 L5.5 5.5 Z" fill="#0f8ad2"/></svg>
<svg class="a" style="left:173px;top:595px;" width="18" height="9" viewBox="0 0 18 9"><text x="0" y="7.8" font-size="9.6" font-weight="bold" fill="#0f8ad2" stroke="#0f8ad2" stroke-width="0.5" font-family="Liberation Sans" textLength="16.5" lengthAdjust="spacingAndGlyphs">ABC</text></svg>
<div class="a " style="left:192px;top:592px;font-size:12.4px;line-height:16px;color:#000;">省份</div>
<svg class="a" style="left:238px;top:597px;" width="11" height="6" viewBox="0 0 11 6"><path d="M0 0 H11 L5.5 5.5 Z" fill="#0f8ad2"/></svg>
<div class="a " style="left:261px;top:592px;font-size:11px;line-height:14px;color:#0f8ad2;letter-spacing:-0.6px">123</div>
<div class="a " style="left:280px;top:592px;font-size:12.4px;line-height:16px;color:#000;">销售金额（元）</div>
<svg class="a" style="left:386px;top:597px;" width="11" height="6" viewBox="0 0 11 6"><path d="M0 0 H11 L5.5 5.5 Z" fill="#0f8ad2"/></svg>
<div class="a " style="left:409px;top:592px;font-size:11px;line-height:14px;color:#0f8ad2;letter-spacing:-0.6px">123</div>
<div class="a " style="left:428px;top:592px;font-size:12.4px;line-height:16px;color:#000;">运费金额（元）</div>
<svg class="a" style="left:534px;top:597px;" width="11" height="6" viewBox="0 0 11 6"><path d="M0 0 H11 L5.5 5.5 Z" fill="#0f8ad2"/></svg>
<div class="a " style="left:557px;top:592px;font-size:11px;line-height:14px;color:#0f8ad2;letter-spacing:-0.6px">123</div>
<div class="a " style="left:576px;top:592px;font-size:12.4px;line-height:16px;color:#000;">销售金额（元）（包含运费）</div>
<svg class="a" style="left:755px;top:597px;" width="11" height="6" viewBox="0 0 11 6"><path d="M0 0 H11 L5.5 5.5 Z" fill="#0f8ad2"/></svg>
<div class="a " style="left:778px;top:592px;font-size:11px;line-height:14px;color:#0f8ad2;letter-spacing:-0.6px">123</div>
<div class="a " style="left:797px;top:592px;font-size:12.4px;line-height:16px;color:#000;">订单数量</div>
<svg class="a" style="left:867px;top:597px;" width="11" height="6" viewBox="0 0 11 6"><path d="M0 0 H11 L5.5 5.5 Z" fill="#0f8ad2"/></svg>
<div class="a " style="left:890px;top:592px;font-size:11px;line-height:14px;color:#0f8ad2;letter-spacing:-0.6px">123</div>
<div class="a " style="left:909px;top:592px;font-size:12.4px;line-height:16px;color:#000;">订单总数量</div>
<svg class="a" style="left:990px;top:597px;" width="11" height="6" viewBox="0 0 11 6"><path d="M0 0 H11 L5.5 5.5 Z" fill="#0f8ad2"/></svg>
<div class="a " style="left:1013px;top:592px;font-size:11px;line-height:14px;color:#0f8ad2;letter-spacing:-0.6px">123</div>
<div class="a " style="left:1032px;top:592px;font-size:12.4px;line-height:16px;color:#000;">订单占比</div>
<svg class="a" style="left:1102px;top:597px;" width="11" height="6" viewBox="0 0 11 6"><path d="M0 0 H11 L5.5 5.5 Z" fill="#0f8ad2"/></svg>
<div class="a" style="left:49px;top:614px;width:1509px;height:188px;overflow:hidden">
<div class="a" style="left:29px;top:0px;width:1040px;height:21px;background:#bcd9f0"></div>
<div class="a" style="left:0;top:0px;width:29px;height:21px;background:#7ebcec"></div>
<div class="a" style="left:0;top:20px;width:29px;height:1px;background:#6e6e6e"></div>
<div class="a" style="left:29px;top:20px;width:1480px;height:1px;background:#efefef"></div>
<div class="a gt" style="left:4px;top:3px">1</div>
<div class="a gt" style="left:35px;top:3px">2022</div>
<div class="a gt" style="left:124px;top:3px">广东省</div>
<div class="a gt" style="left:205px;width:141px;text-align:right;top:3px">372,566,159.03</div>
<div class="a gt" style="left:353px;width:141px;text-align:right;top:3px">94,432.52</div>
<div class="a gt" style="left:501px;width:214px;text-align:right;top:3px">372,660,591.55</div>
<div class="a gt" style="left:722px;width:105px;text-align:right;top:3px">2,406,839</div>
<div class="a gt" style="left:834px;width:116px;text-align:right;top:3px">20,020,772</div>
<div class="a gt" style="left:957px;width:105px;text-align:right;top:3px">0.1202</div>
<div class="a" style="left:0;top:41px;width:29px;height:1px;background:#6e6e6e"></div>
<div class="a" style="left:29px;top:41px;width:1480px;height:1px;background:#efefef"></div>
<div class="a gt" style="left:4px;top:24px">2</div>
<div class="a gt" style="left:35px;top:24px">2022</div>
<div class="a gt" style="left:124px;top:24px">江苏省</div>
<div class="a gt" style="left:205px;width:141px;text-align:right;top:24px">346,432,352.19</div>
<div class="a gt" style="left:353px;width:141px;text-align:right;top:24px">34,715.21</div>
<div class="a gt" style="left:501px;width:214px;text-align:right;top:24px">346,467,067.4</div>
<div class="a gt" style="left:722px;width:105px;text-align:right;top:24px">1,957,082</div>
<div class="a gt" style="left:834px;width:116px;text-align:right;top:24px">20,020,772</div>
<div class="a gt" style="left:957px;width:105px;text-align:right;top:24px">0.0978</div>
<div class="a" style="left:29px;top:42px;width:1040px;height:21px;background:#dde9f6"></div>
<div class="a" style="left:0;top:62px;width:29px;height:1px;background:#6e6e6e"></div>
<div class="a" style="left:29px;top:62px;width:1480px;height:1px;background:#efefef"></div>
<div class="a gt" style="left:4px;top:45px">3</div>
<div class="a gt" style="left:35px;top:45px">2022</div>
<div class="a gt" style="left:124px;top:45px">浙江省</div>
<div class="a gt" style="left:205px;width:141px;text-align:right;top:45px">244,801,901.17</div>
<div class="a gt" style="left:353px;width:141px;text-align:right;top:45px">34,035.22</div>
<div class="a gt" style="left:501px;width:214px;text-align:right;top:45px">244,835,936.39</div>
<div class="a gt" style="left:722px;width:105px;text-align:right;top:45px">1,473,016</div>
<div class="a gt" style="left:834px;width:116px;text-align:right;top:45px">20,020,772</div>
<div class="a gt" style="left:957px;width:105px;text-align:right;top:45px">0.0736</div>
<div class="a" style="left:0;top:83px;width:29px;height:1px;background:#6e6e6e"></div>
<div class="a" style="left:29px;top:83px;width:1480px;height:1px;background:#efefef"></div>
<div class="a gt" style="left:4px;top:66px">4</div>
<div class="a gt" style="left:35px;top:66px">2022</div>
<div class="a gt" style="left:124px;top:66px">山东省</div>
<div class="a gt" style="left:205px;width:141px;text-align:right;top:66px">236,230,067.47</div>
<div class="a gt" style="left:353px;width:141px;text-align:right;top:66px">16,265.84</div>
<div class="a gt" style="left:501px;width:214px;text-align:right;top:66px">236,246,333.31</div>
<div class="a gt" style="left:722px;width:105px;text-align:right;top:66px">1,491,167</div>
<div class="a gt" style="left:834px;width:116px;text-align:right;top:66px">20,020,772</div>
<div class="a gt" style="left:957px;width:105px;text-align:right;top:66px">0.0745</div>
<div class="a" style="left:29px;top:84px;width:1040px;height:21px;background:#dde9f6"></div>
<div class="a" style="left:0;top:104px;width:29px;height:1px;background:#6e6e6e"></div>
<div class="a" style="left:29px;top:104px;width:1480px;height:1px;background:#efefef"></div>
<div class="a gt" style="left:4px;top:87px">5</div>
<div class="a gt" style="left:35px;top:87px">2022</div>
<div class="a gt" style="left:124px;top:87px">河南省</div>
<div class="a gt" style="left:205px;width:141px;text-align:right;top:87px">170,383,770.52</div>
<div class="a gt" style="left:353px;width:141px;text-align:right;top:87px">19,684.22</div>
<div class="a gt" style="left:501px;width:214px;text-align:right;top:87px">170,403,454.74</div>
<div class="a gt" style="left:722px;width:105px;text-align:right;top:87px">1,099,397</div>
<div class="a gt" style="left:834px;width:116px;text-align:right;top:87px">20,020,772</div>
<div class="a gt" style="left:957px;width:105px;text-align:right;top:87px">0.0549</div>
<div class="a" style="left:0;top:125px;width:29px;height:1px;background:#6e6e6e"></div>
<div class="a" style="left:29px;top:125px;width:1480px;height:1px;background:#efefef"></div>
<div class="a gt" style="left:4px;top:108px">6</div>
<div class="a gt" style="left:35px;top:108px">2022</div>
<div class="a gt" style="left:124px;top:108px">安徽省</div>
<div class="a gt" style="left:205px;width:141px;text-align:right;top:108px">158,986,722.22</div>
<div class="a gt" style="left:353px;width:141px;text-align:right;top:108px">10,312.87</div>
<div class="a gt" style="left:501px;width:214px;text-align:right;top:108px">158,997,035.09</div>
<div class="a gt" style="left:722px;width:105px;text-align:right;top:108px">971,566</div>
<div class="a gt" style="left:834px;width:116px;text-align:right;top:108px">20,020,772</div>
<div class="a gt" style="left:957px;width:105px;text-align:right;top:108px">0.0485</div>
<div class="a" style="left:29px;top:126px;width:1040px;height:21px;background:#dde9f6"></div>
<div class="a" style="left:0;top:146px;width:29px;height:1px;background:#6e6e6e"></div>
<div class="a" style="left:29px;top:146px;width:1480px;height:1px;background:#efefef"></div>
<div class="a gt" style="left:4px;top:129px">7</div>
<div class="a gt" style="left:35px;top:129px">2022</div>
<div class="a gt" style="left:124px;top:129px">四川省</div>
<div class="a gt" style="left:205px;width:141px;text-align:right;top:129px">154,800,285.54</div>
<div class="a gt" style="left:353px;width:141px;text-align:right;top:129px">36,504.01</div>
<div class="a gt" style="left:501px;width:214px;text-align:right;top:129px">154,836,789.55</div>
<div class="a gt" style="left:722px;width:105px;text-align:right;top:129px">913,581</div>
<div class="a gt" style="left:834px;width:116px;text-align:right;top:129px">20,020,772</div>
<div class="a gt" style="left:957px;width:105px;text-align:right;top:129px">0.0456</div>
<div class="a" style="left:0;top:167px;width:29px;height:1px;background:#6e6e6e"></div>
<div class="a" style="left:29px;top:167px;width:1480px;height:1px;background:#efefef"></div>
<div class="a gt" style="left:4px;top:150px">8</div>
<div class="a gt" style="left:35px;top:150px">2022</div>
<div class="a gt" style="left:124px;top:150px">上海</div>
<div class="a gt" style="left:205px;width:141px;text-align:right;top:150px">146,568,350.89</div>
<div class="a gt" style="left:353px;width:141px;text-align:right;top:150px">39,755.96</div>
<div class="a gt" style="left:501px;width:214px;text-align:right;top:150px">146,608,106.85</div>
<div class="a gt" style="left:722px;width:105px;text-align:right;top:150px">717,794</div>
<div class="a gt" style="left:834px;width:116px;text-align:right;top:150px">20,020,772</div>
<div class="a gt" style="left:957px;width:105px;text-align:right;top:150px">0.0359</div>
<div class="a" style="left:29px;top:168px;width:1040px;height:21px;background:#dde9f6"></div>
<div class="a" style="left:0;top:188px;width:29px;height:1px;background:#6e6e6e"></div>
<div class="a" style="left:29px;top:188px;width:1480px;height:1px;background:#efefef"></div>
<div class="a gt" style="left:4px;top:171px">9</div>
<div class="a gt" style="left:35px;top:171px">2022</div>
<div class="a gt" style="left:124px;top:171px">北京</div>
<div class="a gt" style="left:205px;width:141px;text-align:right;top:171px">135,928,095.08</div>
<div class="a gt" style="left:353px;width:141px;text-align:right;top:171px">42,211.12</div>
<div class="a gt" style="left:501px;width:214px;text-align:right;top:171px">135,970,306.2</div>
<div class="a gt" style="left:722px;width:105px;text-align:right;top:171px">679,899</div>
<div class="a gt" style="left:834px;width:116px;text-align:right;top:171px">20,020,772</div>
<div class="a gt" style="left:957px;width:105px;text-align:right;top:171px">0.034</div>
<div class="a" style="left:118px;top:0;width:1px;height:188px;background:#ececec"></div>
<div class="a" style="left:205px;top:0;width:1px;height:188px;background:#ececec"></div>
<div class="a" style="left:353px;top:0;width:1px;height:188px;background:#ececec"></div>
<div class="a" style="left:501px;top:0;width:1px;height:188px;background:#ececec"></div>
<div class="a" style="left:722px;top:0;width:1px;height:188px;background:#ececec"></div>
<div class="a" style="left:834px;top:0;width:1px;height:188px;background:#ececec"></div>
<div class="a" style="left:957px;top:0;width:1px;height:188px;background:#ececec"></div>
<div class="a" style="left:1069px;top:0;width:1px;height:188px;background:#ececec"></div>
<div class="a" style="left:29px;top:0;width:1px;height:188px;background:#6e6e6e"></div>
<div class="a" style="left:29px;top:0;width:89px;height:21px;background:#67abe3;border:2px solid #1c1c1c;box-sizing:border-box"></div>
<div class="a gt" style="left:35px;top:3px;color:#fff">2022</div>
</div>
<div class="a" style="left:1558px;top:586px;width:15px;height:216px;background:#f3f3f3"></div>
<svg class="a" style="left:1560px;top:591px;" width="11" height="8" viewBox="0 0 11 8"><path d="M1.5 6.5 L5.5 2.5 L9.5 6.5" stroke="#333" stroke-width="1.8" fill="none"/></svg>
<div class="a" style="left:1558px;top:603px;width:15px;height:16px;background:#cdcdcd"></div>
<svg class="a" style="left:1560px;top:790px;" width="11" height="8" viewBox="0 0 11 8"><path d="M1.5 1.5 L5.5 5.5 L9.5 1.5" stroke="#1e1e1e" stroke-width="1.5" fill="none"/></svg>
<svg class="a" style="left:1578px;top:594px;" width="17" height="17" viewBox="0 0 17 17"><rect x="1" y="1" width="15" height="15" fill="#fff" stroke="#1a8ad4" stroke-width="1.6"/><rect x="8" y="1" width="8" height="11" fill="#62c0ee"/><path d="M8 1 V16" stroke="#1a8ad4" stroke-width="1.4"/><circle cx="4" cy="12" r="2.3" fill="#1a8ad4"/></svg>
<div class="a " style="left:1570px;top:616px;font-size:12.4px;line-height:16px;color:#000;width:32px;text-align:center;transform:rotate(90deg)">面板</div>
<svg class="a" style="left:1578px;top:653px;" width="15" height="14" viewBox="0 0 15 14"><rect x="1" y="1" width="13" height="12" fill="#fff" stroke="#1a8ad4" stroke-width="1.3"/><rect x="1" y="1" width="13" height="3" fill="#1a8ad4"/><path d="M3 6 h1 M6 6 h1 M9 6 h1 M12 6 h1 M4.5 8 h1 M7.5 8 h1 M10.5 8 h1 M3 10 h1 M6 10 h1 M9 10 h1 M12 10 h1" stroke="#1a8ad4"/></svg>
<svg class="a" style="left:1578px;top:674px;" width="16" height="16" viewBox="0 0 16 16"><circle cx="8" cy="8" r="6.8" fill="none" stroke="#1a8ad4" stroke-width="1.4"/><circle cx="5.8" cy="5.8" r="1" fill="#1a8ad4"/><circle cx="10.2" cy="5.8" r="1" fill="#1a8ad4"/><circle cx="5.8" cy="10.2" r="1" fill="#1a8ad4"/><circle cx="10.2" cy="10.2" r="1" fill="#1a8ad4"/></svg>
<svg class="a" style="left:1578px;top:695px;" width="15" height="16" viewBox="0 0 15 16"><rect x="1" y="5" width="13" height="10" fill="#fff" stroke="#1a8ad4" stroke-width="1.2"/><path d="M1 8.5 H14 M1 11.5 H14 M5.3 5 V15 M9.7 5 V15" stroke="#f28a00" stroke-width="1"/><path d="M7.5 0 V4 M5.5 2 H9.5" stroke="#f28a00" stroke-width="1.2"/></svg>
<svg class="a" style="left:1578px;top:717px;" width="15" height="15" viewBox="0 0 15 15"><rect x="1" y="1" width="13" height="13" fill="#fff" stroke="#1a8ad4" stroke-width="1.4"/><rect x="1" y="1" width="13" height="3" fill="#1a8ad4"/><path d="M1 9 H8 V14" stroke="#1a8ad4" stroke-width="1.2" fill="none"/><rect x="3" y="5.5" width="4" height="2" fill="#62c0ee"/><path d="M11 9 V13 M10 9 H12 M10 13 H12" stroke="#1a8ad4"/></svg>
<svg class="a" style="left:1578px;top:739px;" width="15" height="15" viewBox="0 0 15 15"><rect x="1" y="1" width="5.5" height="5" rx="1.5" fill="none" stroke="#1a8ad4" stroke-width="1.2"/><rect x="8.5" y="1" width="5.5" height="5" rx="1.5" fill="none" stroke="#1a8ad4" stroke-width="1.2"/><rect x="1" y="8.5" width="5.5" height="5" rx="1.5" fill="none" stroke="#1a8ad4" stroke-width="1.2"/><rect x="8.5" y="8.5" width="5.5" height="5" rx="1.5" fill="none" stroke="#f28a00" stroke-width="1.2"/><path d="M2.5 3.5 H5 M10 3.5 H12.5 M11.25 2.2 V4.8 M2.5 10 L5 12.5 M5 10 L2.5 12.5 M10 10.3 H12.5 M10 11.8 H12.5" stroke="#1a8ad4" stroke-width="0.9"/></svg>
<svg class="a" style="left:1578px;top:813px;" width="17" height="17" viewBox="0 0 17 17"><rect x="1" y="3" width="5" height="13" rx="1.5" fill="#1a8ad4"/><path d="M7 15 H15 V11" stroke="#1a8ad4" stroke-width="2" fill="none"/><path d="M9 2 L6.5 4.5 L9 7" stroke="#1a8ad4" stroke-width="1.5" fill="none"/><path d="M7 4.5 H11 C13 4.5 14 6 14 8 V10" stroke="#1a8ad4" stroke-width="1.5" fill="none"/></svg>
<svg class="a" style="left:59px;top:810px;" width="17" height="17" viewBox="0 0 17 17"><path d="M3 8 A5.5 5.5 0 0 1 12.5 4.2" stroke="#1a8ad4" stroke-width="1.6" fill="none"/><path d="M10 2 L13.5 1.5 L13.3 5.5 Z" fill="#1a8ad4"/><path d="M14 9 A5.5 5.5 0 0 1 4.5 12.8" stroke="#1a8ad4" stroke-width="1.6" fill="none"/><path d="M7 15 L3.5 15.5 L3.7 11.5 Z" fill="#1a8ad4"/><path d="M5 8.5 L8.5 5 L12 8.5 L8.5 12 Z" fill="none" stroke="#1a8ad4" stroke-width="1.2"/></svg>
<div class="a " style="left:79px;top:809px;font-size:12.4px;line-height:17px;color:#000;">刷新</div>
<svg class="a" style="left:118px;top:816px;" width="8" height="5" viewBox="0 0 8 5"><path d="M0 0 H8 L4.0 4.5 Z" fill="#1e1e1e"/></svg>
<div class="a" style="left:135px;top:810px;width:2px;height:15px;background:repeating-linear-gradient(#b8ae98 0 2px,transparent 2px 4px)"></div>
<svg class="a" style="left:145px;top:810px;" width="16" height="16" viewBox="0 0 16 16"><circle cx="8" cy="8" r="6.6" fill="none" stroke="#9a9a9a" stroke-width="1.3"/><path d="M4.8 8.3 L7.2 10.6 L11.3 5.8" stroke="#9a9a9a" stroke-width="1.3" fill="none"/></svg>
<div class="a " style="left:166px;top:809px;font-size:12.4px;line-height:17px;color:#a0a0a0;">保存</div>
<svg class="a" style="left:203px;top:816px;" width="8" height="5" viewBox="0 0 8 5"><path d="M0 0 H8 L4.0 4.5 Z" fill="#666"/></svg>
<svg class="a" style="left:220px;top:811px;" width="14" height="14" viewBox="0 0 14 14"><rect x="0.7" y="0.7" width="12.6" height="12.6" fill="none" stroke="#9a9a9a" stroke-width="1.2"/><path d="M3.5 3.5 L10.5 10.5 M10.5 3.5 L3.5 10.5" stroke="#9a9a9a" stroke-width="1"/></svg>
<div class="a " style="left:239px;top:809px;font-size:12.4px;line-height:17px;color:#a0a0a0;">取消</div>
<div class="a" style="left:273px;top:804px;width:1px;height:26px;background:#8c8c8c"></div>
<svg class="a" style="left:283px;top:811px;" width="16" height="15" viewBox="0 0 16 15"><path d="M1 2 H14 M1 6 H9 M1 10 H7 M1 14 H6" stroke="#1a8ad4" stroke-width="1.6"/><path d="M9 14 L14 8.5 L15.5 10 L10.5 15.5 Z" fill="#1a8ad4"/></svg>
<svg class="a" style="left:307px;top:811px;" width="16" height="15" viewBox="0 0 16 15"><path d="M1 2 H14 M1 7 H8 M1 12 H8" stroke="#9a9a9a" stroke-width="1.5"/><path d="M12 7 V15 M8.5 11 H15.5" stroke="#9a9a9a" stroke-width="1.5"/></svg>
<svg class="a" style="left:331px;top:811px;" width="16" height="15" viewBox="0 0 16 15"><path d="M1 2 H14 M1 7 H5 M1 12 H5" stroke="#9a9a9a" stroke-width="1.5"/><circle cx="11" cy="10" r="4" fill="none" stroke="#9a9a9a" stroke-width="1.2"/><path d="M9 10 H13 M11 8 V12" stroke="#9a9a9a" stroke-width="1"/></svg>
<svg class="a" style="left:355px;top:811px;" width="16" height="15" viewBox="0 0 16 15"><path d="M1 2 H14 M1 7 H6 M9 7 H14 M1 12 H14" stroke="#9a9a9a" stroke-width="1.5"/></svg>
<div class="a" style="left:379px;top:810px;width:2px;height:15px;background:repeating-linear-gradient(#b8ae98 0 2px,transparent 2px 4px)"></div>
<svg class="a" style="left:387px;top:810px;" width="14" height="16" viewBox="0 0 14 16"><path d="M2 2 V14" stroke="#9a9a9a" stroke-width="1.6"/><path d="M11 2 L5 8 L11 14" stroke="#9a9a9a" stroke-width="1.6" fill="none"/></svg>
<svg class="a" style="left:410px;top:810px;" width="12" height="16" viewBox="0 0 12 16"><path d="M9 2 L3 8 L9 14" stroke="#9a9a9a" stroke-width="1.6" fill="none"/></svg>
<svg class="a" style="left:434px;top:810px;" width="12" height="16" viewBox="0 0 12 16"><path d="M3 2 L9 8 L3 14" stroke="#1a8ad4" stroke-width="1.6" fill="none"/></svg>
<svg class="a" style="left:455px;top:810px;" width="14" height="16" viewBox="0 0 14 16"><path d="M12 2 V14" stroke="#1a8ad4" stroke-width="1.6"/><path d="M3 2 L9 8 L3 14" stroke="#1a8ad4" stroke-width="1.6" fill="none"/></svg>
<svg class="a" style="left:478px;top:810px;" width="16" height="16" viewBox="0 0 16 16"><path d="M1 5 V1 H5 M11 1 H15 V5 M15 11 V15 H11 M5 15 H1 V11" stroke="#1a8ad4" stroke-width="1.4" fill="none"/><rect x="5" y="4.5" width="6" height="7" fill="none" stroke="#1a8ad4" stroke-width="1.4"/></svg>
<div class="a" style="left:503px;top:810px;width:2px;height:15px;background:repeating-linear-gradient(#b8ae98 0 2px,transparent 2px 4px)"></div>
<svg class="a" style="left:515px;top:810px;" width="16" height="16" viewBox="0 0 16 16"><path d="M8 12 V2 M4 6 L8 2 L12 6" stroke="#1a8ad4" stroke-width="1.6" fill="none"/><path d="M2 10 V15 H14 V10" stroke="#1a8ad4" stroke-width="1.5" fill="none"/></svg>
<div class="a " style="left:536px;top:809px;font-size:12px;line-height:17px;color:#000;">导出数据...</div>
<svg class="a" style="left:606px;top:816px;" width="8" height="5" viewBox="0 0 8 5"><path d="M0 0 H8 L4.0 4.5 Z" fill="#1e1e1e"/></svg>
<div class="a" style="left:624px;top:810px;width:2px;height:15px;background:repeating-linear-gradient(#b8ae98 0 2px,transparent 2px 4px)"></div>
<svg class="a" style="left:631px;top:810px;" width="16" height="16" viewBox="0 0 16 16"><circle cx="8" cy="8" r="4.8" fill="#1a8ad4"/><rect x="6.5" y="0.8" width="3" height="3.5" fill="#1a8ad4" transform="rotate(0 8 8)"/><rect x="6.5" y="0.8" width="3" height="3.5" fill="#1a8ad4" transform="rotate(45 8 8)"/><rect x="6.5" y="0.8" width="3" height="3.5" fill="#1a8ad4" transform="rotate(90 8 8)"/><rect x="6.5" y="0.8" width="3" height="3.5" fill="#1a8ad4" transform="rotate(135 8 8)"/><rect x="6.5" y="0.8" width="3" height="3.5" fill="#1a8ad4" transform="rotate(180 8 8)"/><rect x="6.5" y="0.8" width="3" height="3.5" fill="#1a8ad4" transform="rotate(225 8 8)"/><rect x="6.5" y="0.8" width="3" height="3.5" fill="#1a8ad4" transform="rotate(270 8 8)"/><rect x="6.5" y="0.8" width="3" height="3.5" fill="#1a8ad4" transform="rotate(315 8 8)"/><circle cx="8" cy="8" r="2" fill="#f7f7f7"/></svg>
<div class="a" style="left:654px;top:806px;width:53px;height:22px;background:#fff;border:1px solid #7a7a7a;box-sizing:border-box"></div>
<div class="a " style="left:658px;top:810px;font-size:12.4px;line-height:17px;color:#000;">200</div>
<svg class="a" style="left:712px;top:810px;" width="17" height="17" viewBox="0 0 17 17"><path d="M2 1 L8.5 8 L15 1" stroke="#1a8ad4" stroke-width="1.5" fill="none"/><path d="M8.5 8 V13 M6 10.5 L8.5 13 L11 10.5" stroke="#1a8ad4" stroke-width="1.4" fill="none"/><path d="M1.5 11 V15.5 H15.5 V11" stroke="#1a8ad4" stroke-width="1.4" fill="none"/></svg>
<div class="a " style="left:736px;top:809px;font-size:12.4px;line-height:17px;color:#000;">204</div>
<div class="a" style="left:765px;top:810px;width:2px;height:15px;background:repeating-linear-gradient(#b8ae98 0 2px,transparent 2px 4px)"></div>
<div class="a " style="left:791px;top:807px;font-size:10px;line-height:17px;color:#666;">···</div>
<div class="a " style="left:812px;top:809px;font-size:12.4px;line-height:17px;color:#000;letter-spacing:0.12px">200 行已获取 - 10.986s (1ms 获取), 2025-10-21 20:40:41</div>
<div class="a" style="left:0px;top:834px;width:1600px;height:26px;background:#f7f7f7"></div>
<div class="a" style="left:778px;top:835px;width:1px;height:23px;background:#c8c8c8"></div>
<div class="a" style="left:814px;top:835px;width:1px;height:23px;background:#c8c8c8"></div>
<div class="a" style="left:841px;top:835px;width:1px;height:23px;background:#c8c8c8"></div>
<div class="a" style="left:975px;top:835px;width:1px;height:23px;background:#c8c8c8"></div>
<div class="a" style="left:1103px;top:835px;width:1px;height:23px;background:#c8c8c8"></div>
<div class="a" style="left:1231px;top:835px;width:1px;height:23px;background:#c8c8c8"></div>
<div class="a " style="left:786px;top:837px;font-size:12.4px;line-height:16px;color:#000;">CST</div>
<div class="a " style="left:822px;top:837px;font-size:12.4px;line-height:16px;color:#000;">zh</div>
<div class="a " style="left:849px;top:837px;font-size:12.4px;line-height:16px;color:#000;">可写</div>
<div class="a " style="left:983px;top:837px;font-size:12.4px;line-height:16px;color:#000;">智能插入</div>
<div class="a " style="left:1111px;top:837px;font-size:12.4px;line-height:16px;color:#000;letter-spacing:0.2px">1106 : 1 : 48663</div>
<div class="a " style="left:1239px;top:837px;font-size:12.4px;line-height:16px;color:#000;">Sel: 0 | 0</div>
<div class="a" style="left:1315px;top:840px;width:1px;height:15px;background:repeating-linear-gradient(#b8ae98 0 2px,transparent 2px 4px)"></div>
<div class="a" style="left:0px;top:860px;width:1600px;height:40px;background:#000"></div>
<svg class="a" style="left:16px;top:872px;" width="16" height="16" viewBox="0 0 16 16"><path d="M0 2.3 L6.8 1.3 V7.6 H0 Z M7.6 1.2 L16 0 V7.6 H7.6 Z M0 8.4 H6.8 V14.7 L0 13.7 Z M7.6 8.4 H16 V16 L7.6 14.8 Z" fill="#fff"/></svg>
<svg class="a" style="left:63px;top:871px;" width="18" height="18" viewBox="0 0 18 18"><circle cx="10.5" cy="7" r="5.5" fill="none" stroke="#fff" stroke-width="1.3"/><path d="M6.5 11 L1 16.5" stroke="#fff" stroke-width="1.5"/></svg>
<svg class="a" style="left:111px;top:871px;" width="18" height="18" viewBox="0 0 18 18"><rect x="1.5" y="4.5" width="11" height="9" fill="none" stroke="#fff" stroke-width="1.3"/><path d="M1 1.5 H13 M1 16.5 H13 M15.5 1 V17" stroke="#fff" stroke-width="1.3"/><rect x="14.5" y="6" width="2" height="2" fill="#fff"/></svg>
<svg class="a" style="left:159px;top:868px;" width="24" height="24" viewBox="0 0 24 24"><circle cx="12" cy="13" r="8" fill="#1ea1e8"/><path d="M7 13 H17 C17 9.5 15 7.5 12 7.5 C9 7.5 7 10 7 13 C7 16.5 9.5 18.5 12.5 18.5 C14.5 18.5 16 17.5 16.5 16 H13.5" fill="none" stroke="#fff" stroke-width="2.2"/><path d="M3 20 C1 16 8 6 20 3 C23 2.5 22 6 19 8" fill="none" stroke="#f6c31a" stroke-width="1.6"/></svg>
<svg class="a" style="left:208px;top:869px;" width="24" height="22" viewBox="0 0 24 22"><path d="M1 3 H9 L11 5 H23 V21 H1 Z" fill="#f0cd62"/><rect x="1" y="7" width="22" height="14" fill="#fbe29a"/><path d="M7 21 V14 H17 V21" stroke="#1a8ad4" stroke-width="3" fill="none"/></svg>
<svg class="a" style="left:257px;top:868px;" width="24" height="24" viewBox="0 0 24 24"><g transform="scale(1.0)"><circle cx="12" cy="12" r="10.85" fill="#fff" stroke="#3db5be" stroke-width="2.3"/><path d="M4.5 18.5 C3.5 15 4 12.5 5.8 10.5 L7 9.5 C6 12 6 15 7 18 Z" fill="#3a2e28"/><path d="M7 9 C9 7 11 6.5 14 6.8" stroke="#6a5a50" stroke-width="0.7" fill="none"/><circle cx="12.3" cy="9.2" r="0.9" fill="#2b2220"/><ellipse cx="18.5" cy="9.4" rx="2.4" ry="1.4" fill="#2b2220"/><path d="M10.5 15.5 C12.5 16.8 14.5 17.5 16.5 17 L16 22.2 C14 23.2 11.5 23.2 9.5 22.5 C10.5 20 11 18 10.5 15.5 Z" fill="#3a2e28"/><path d="M15.5 15 L17 12.5 L18.5 15.5 L17 18 Z" fill="#3a2e28"/><rect x="14.5" y="18.3" width="1.6" height="1.6" fill="#fff"/></g></svg>
<div class="a" style="left:294px;top:860px;width:48px;height:40px;background:#333"></div>
<div class="a" style="left:294px;top:898px;width:48px;height:2px;background:#76b9ed"></div>
<div class="a" style="left:1595px;top:860px;width:1px;height:40px;background:#555"></div>
<svg class="a" style="left:306px;top:868px;" width="24" height="24" viewBox="0 0 24 24"><g transform="scale(1.0)"><circle cx="12" cy="12" r="10.85" fill="#fff" stroke="#3db5be" stroke-width="2.3"/><path d="M4.5 18.5 C3.5 15 4 12.5 5.8 10.5 L7 9.5 C6 12 6 15 7 18 Z" fill="#3a2e28"/><path d="M7 9 C9 7 11 6.5 14 6.8" stroke="#6a5a50" stroke-width="0.7" fill="none"/><circle cx="12.3" cy="9.2" r="0.9" fill="#2b2220"/><ellipse cx="18.5" cy="9.4" rx="2.4" ry="1.4" fill="#2b2220"/><path d="M10.5 15.5 C12.5 16.8 14.5 17.5 16.5 17 L16 22.2 C14 23.2 11.5 23.2 9.5 22.5 C10.5 20 11 18 10.5 15.5 Z" fill="#3a2e28"/><path d="M15.5 15 L17 12.5 L18.5 15.5 L17 18 Z" fill="#3a2e28"/><rect x="14.5" y="18.3" width="1.6" height="1.6" fill="#fff"/></g></svg>
<svg class="a" style="left:1347px;top:875px;" width="14" height="10" viewBox="0 0 14 10"><path d="M1 8 L7 2 L13 8" stroke="#fff" stroke-width="1.3" fill="none"/></svg>
<svg class="a" style="left:1372px;top:871px;" width="16" height="20" viewBox="0 0 16 20"><rect x="3" y="1" width="7" height="4" fill="none" stroke="#fff"/><rect x="1.5" y="5" width="10" height="13" rx="1" fill="none" stroke="#fff" stroke-width="1.2"/><path d="M10 16 L12 18 L15 14" stroke="#fff" fill="none"/></svg>
<svg class="a" style="left:1394px;top:873px;" width="18" height="16" viewBox="0 0 18 16"><rect x="4.5" y="2.5" width="13" height="9" fill="none" stroke="#fff" stroke-width="1.1"/><path d="M11 11.5 V14.5 M7 14.5 H15" stroke="#fff" stroke-width="1.1"/><rect x="0.5" y="0.5" width="5" height="5" fill="#000" stroke="#fff"/></svg>
<svg class="a" style="left:1418px;top:872px;" width="18" height="16" viewBox="0 0 18 16"><path d="M1 5.5 H4 L8 2 V14 L4 10.5 H1 Z" fill="none" stroke="#fff" stroke-width="1.1"/><path d="M10.5 5.5 A3 3 0 0 1 10.5 10.5 M12.5 3.5 A6 6 0 0 1 12.5 12.5 M14.5 1.5 A9 9 0 0 1 14.5 14.5" fill="none" stroke="#fff" stroke-width="1.1"/></svg>
<div class="a " style="left:1442px;top:871px;font-size:13px;line-height:17px;color:#fff;">ENG</div>
<div class="a " style="left:1484px;top:862px;font-size:12.4px;line-height:17px;color:#fff;width:52px;text-align:center">20:41</div>
<div class="a " style="left:1476px;top:881px;font-size:13px;line-height:17px;color:#fff;">2025/10/21</div>
<svg class="a" style="left:1558px;top:871px;" width="27" height="26" viewBox="0 0 27 26"><path d="M1 1 H17 V13.5 H7 L3.5 17 V13.5 H1 Z" fill="#fff"/><path d="M3.5 4.5 H14.5 M3.5 7.5 H14.5 M3.5 10.5 H11" stroke="#000" stroke-width="1.2"/><circle cx="16.5" cy="16" r="8" fill="#333" stroke="#000" stroke-width="1"/><circle cx="16.5" cy="16" r="7.3" fill="none" stroke="#777" stroke-width="0.8"/><text x="16.5" y="20.5" font-size="12" font-weight="bold" fill="#fff" text-anchor="middle" font-family="Liberation Sans">1</text></svg>
<div class="a" style="left:0;top:0;width:1600px;height:860px;overflow:hidden;pointer-events:none"><div class="wm" style="left:-270px;top:133px">audit审计01(Audit1)<br>audit-172.18.210.237</div><div class="wm" style="left:30px;top:133px">audit审计01(Audit1)<br>audit-172.18.210.237</div><div class="wm" style="left:330px;top:133px">audit审计01(Audit1)<br>audit-172.18.210.237</div><div class="wm" style="left:630px;top:133px">audit审计01(Audit1)<br>audit-172.18.210.237</div><div class="wm" style="left:930px;top:133px">audit审计01(Audit1)<br>audit-172.18.210.237</div><div class="wm" style="left:1230px;top:133px">audit审计01(Audit1)<br>audit-172.18.210.237</div><div class="wm" style="left:1530px;top:133px">audit审计01(Audit1)<br>audit-172.18.210.237</div><div class="wm" style="left:-270px;top:433px">audit审计01(Audit1)<br>audit-172.18.210.237</div><div class="wm" style="left:30px;top:433px">audit审计01(Audit1)<br>audit-172.18.210.237</div><div class="wm" style="left:330px;top:433px">audit审计01(Audit1)<br>audit-172.18.210.237</div><div class="wm" style="left:630px;top:433px">audit审计01(Audit1)<br>audit-172.18.210.237</div><div class="wm" style="left:930px;top:433px">audit审计01(Audit1)<br>audit-172.18.210.237</div><div class="wm" style="left:1230px;top:433px">audit审计01(Audit1)<br>audit-172.18.210.237</div><div class="wm" style="left:1530px;top:433px">audit审计01(Audit1)<br>audit-172.18.210.237</div><div class="wm" style="left:-270px;top:733px">audit审计01(Audit1)<br>audit-172.18.210.237</div><div class="wm" style="left:30px;top:733px">audit审计01(Audit1)<br>audit-172.18.210.237</div><div class="wm" style="left:330px;top:733px">audit审计01(Audit1)<br>audit-172.18.210.237</div><div class="wm" style="left:630px;top:733px">audit审计01(Audit1)<br>audit-172.18.210.237</div><div class="wm" style="left:930px;top:733px">audit审计01(Audit1)<br>audit-172.18.210.237</div><div class="wm" style="left:1230px;top:733px">audit审计01(Audit1)<br>audit-172.18.210.237</div><div class="wm" style="left:1530px;top:733px">audit审计01(Audit1)<br>audit-172.18.210.237</div></div></body></html>
